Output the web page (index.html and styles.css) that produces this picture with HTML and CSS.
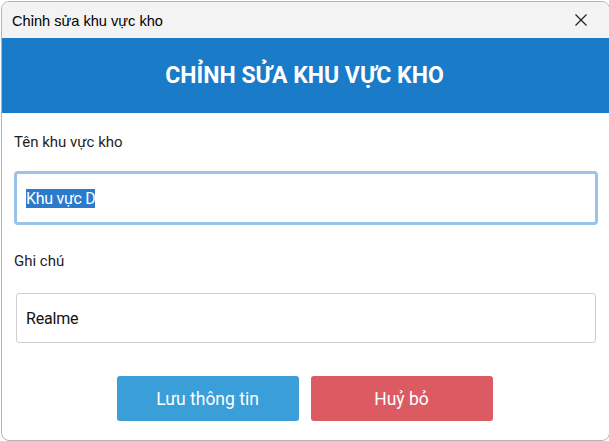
FILE: index.html
```html
<!DOCTYPE html>
<html lang="vi">
<head>
<meta charset="utf-8">
<title>Chỉnh sửa khu vực kho</title>
<link rel="stylesheet" href="styles.css">
</head>
<body>
<div class="window">
  <div class="titlebar">
    <span class="title">Chỉnh sửa khu vực kho</span>
    <svg class="close" width="12" height="12" viewBox="0 0 12 12"><path d="M0.5 0.5 L11.5 11.5 M11.5 0.5 L0.5 11.5" stroke="#1a1a1a" stroke-width="1.1" fill="none"/></svg>
  </div>
  <div class="header"><h1 class="heading">CHỈNH SỬA KHU VỰC KHO</h1></div>
  <div class="content">
    <div class="label">Tên khu vực kho</div>
    <div class="field focused"><span class="selected">Khu vực D</span></div>
    <div class="label second">Ghi chú</div>
    <div class="field plain">Realme</div>
    <div class="actions">
      <button class="btn save">Lưu thông tin</button>
      <button class="btn cancel">Huỷ bỏ</button>
    </div>
  </div>
</div>
</body>
</html>
```
FILE: styles.css
```css
html, body {
  margin: 0;
  padding: 0;
  background: #ffffff;
}
body {
  width: 609px;
  height: 441px;
  overflow: hidden;
}
.window {
  box-sizing: border-box;
  margin: 1px 0 0 1px;
  width: 609px;
  height: 440px;
  border: 1px solid #b4b4b4;
  border-radius: 8px;
  overflow: hidden;
  background: #ffffff;
  display: flex;
  flex-direction: column;
}
.titlebar {
  height: 36px;
  background: #f3f3f3;
  display: flex;
  align-items: center;
  justify-content: space-between;
  padding: 0 22px 0 10px;
  flex-shrink: 0;
}
.title {
  font-family: "Liberation Sans", Arial, sans-serif;
  font-size: 14.6px;
  color: #000;
  margin-top: 1px;
}
.close {
  display: block;
}
.header {
  height: 75px;
  background: #1a7bc8;
  display: flex;
  align-items: center;
  justify-content: center;
  flex-shrink: 0;
}
.heading {
  margin: 0;
  font-family: Roboto, "Liberation Sans", sans-serif;
  font-weight: 700;
  font-size: 23px;
  color: #ffffff;
  padding-right: 2px;
}
.content {
  padding: 21px 11px 0 12px;
  font-family: Roboto, "Liberation Sans", sans-serif;
}
.label {
  font-size: 15px;
  line-height: 17px;
  color: #1e1e1e;
}
.label.second {
  margin-top: 28px;
}
.field {
  box-sizing: border-box;
  font-size: 16px;
  color: #111;
  display: flex;
  align-items: center;
  background: #fff;
}
.field.focused {
  margin-top: 20px;
  height: 54px;
  border: 3px solid #9ac3ea;
  border-radius: 4px;
  padding-left: 9px;
}
.selected {
  background: #2c7acb;
  color: #ffffff;
  line-height: 19px;
  letter-spacing: -0.3px;
}
.field.plain {
  margin: 23px 2px 0 2px;
  height: 50px;
  border: 1px solid #cfcfcf;
  border-radius: 3px;
  padding-left: 9px;
  letter-spacing: -0.2px;
}
.actions {
  margin-top: 33px;
  display: flex;
  justify-content: center;
  gap: 12px;
  padding-right: 3px;
}
.btn {
  width: 182px;
  height: 45px;
  border: none;
  border-radius: 3px;
  font-family: Roboto, "Liberation Sans", sans-serif;
  font-size: 17.5px;
  color: #ffffff;
  padding: 0;
}
.btn.save {
  background: #3a9ed8;
}
.btn.cancel {
  background: #dc5a62;
}
```
